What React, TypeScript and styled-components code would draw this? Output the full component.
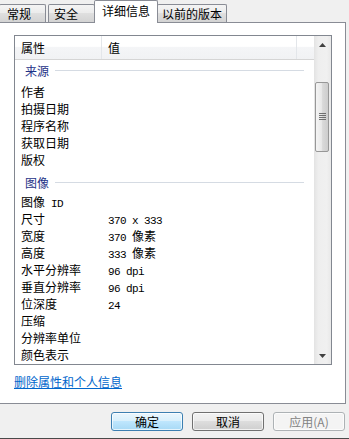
import styled, { createGlobalStyle } from "styled-components";

const GlobalStyle = createGlobalStyle`
  html, body {
    margin: 0;
    padding: 0;
    background: #f0f0f0;
  }
  body {
    font-family: "Noto Sans CJK SC", "Noto Sans", sans-serif;
    font-size: 12px;
    color: #000;
  }
`;

const Dialog = styled.div`
  width: 349px;
  height: 439px;
  display: flex;
  flex-direction: column;
  overflow: hidden;
  background: #f0f0f0;
`;

const TabStrip = styled.div`
  height: 22px;
  display: flex;
  align-items: flex-end;
  position: relative;
  z-index: 1;
`;

const Tab = styled.div<{ $active?: boolean; $w: number; $pl: number; $ml: number }>`
  box-sizing: border-box;
  width: ${(p) => p.$w}px;
  margin-left: ${(p) => p.$ml}px;
  padding-left: ${(p) => p.$pl}px;
  height: ${(p) => (p.$active ? 23 : 18)}px;
  margin-bottom: ${(p) => (p.$active ? -1 : 0)}px;
  border: 1px solid #898c95;
  border-bottom: none;
  border-radius: 2px 2px 0 0;
  background: ${(p) =>
    p.$active
      ? "#fff"
      : "linear-gradient(#f4f4f4, #ececec 45%, #dfdfdf 50%, #d3d3d3)"};
  line-height: ${(p) => (p.$active ? 20 : 17)}px;
  white-space: nowrap;
`;

const Panel = styled.div`
  height: 382px;
  box-sizing: border-box;
  margin-right: 3px;
  background: #fff;
  border: 1px solid #898c95;
  border-left: none;
  padding: 12px 0 0 14px;
  display: flex;
  flex-direction: column;
`;

const ListBox = styled.div`
  width: 318px;
  height: 330px;
  box-sizing: border-box;
  border: 1px solid #828790;
  display: flex;
  background: #fff;
`;

const ListContent = styled.div`
  flex: 1;
  overflow: hidden;
`;

const Header = styled.div`
  height: 24px;
  box-sizing: border-box;
  display: flex;
  border-bottom: 1px solid #d5d5d5;
  background: linear-gradient(#ffffff, #ffffff 45%, #f4f5f7 50%, #f1f2f4);
`;

const HeadCell = styled.div<{ $w?: number }>`
  box-sizing: border-box;
  width: ${(p) => (p.$w ? `${p.$w}px` : "auto")};
  flex: ${(p) => (p.$w ? "none" : "1")};
  padding-left: 6px;
  line-height: 23px;
  border-right: 1px solid #e3e6ea;
  &:last-child {
    border-right: none;
  }
`;

const Group = styled.div<{ $first?: boolean }>`
  display: flex;
  align-items: center;
  height: ${(p) => (p.$first ? 23 : 25)}px;
  box-sizing: border-box;
  padding: ${(p) => (p.$first ? "2px" : "6px")} 10px
    ${(p) => (p.$first ? "5px" : "3px")} 10px;
  color: #1e3287;
`;

const GroupLine = styled.div`
  flex: 1;
  height: 1px;
  margin-left: 6px;
  background: #d5dbe3;
`;

const Row = styled.div`
  height: 17px;
  display: flex;
  align-items: center;
  white-space: nowrap;
`;

const Label = styled.div`
  width: 93px;
  box-sizing: border-box;
  padding-left: 6px;
`;

const Value = styled.div`
  flex: 1;
`;

const Ascii = styled.span`
  font-family: "Liberation Mono", "DejaVu Sans Mono", monospace;
  font-size: 11px;
  letter-spacing: -0.6px;
  white-space: pre;
`;

const ScrollBar = styled.div`
  width: 17px;
  display: flex;
  flex-direction: column;
  background: linear-gradient(90deg, #e3e3e3, #eeeeee 25%, #f0f0f0 75%, #e8e8e8);
`;

const ArrowButton = styled.div`
  height: 17px;
  display: flex;
  align-items: center;
  justify-content: center;
`;

const Track = styled.div`
  flex: 1;
  padding: 29px 0 0 1px;
`;

const Thumb = styled.div`
  width: 14px;
  height: 70px;
  box-sizing: border-box;
  border: 1px solid #979797;
  border-radius: 2px;
  background: linear-gradient(90deg, #f4f4f4, #e9e9e9 45%, #d9d9d9 55%, #cdcdcd);
  display: flex;
  align-items: center;
  justify-content: center;
`;

const Grip = styled.div`
  width: 7px;
  height: 8px;
  background: repeating-linear-gradient(#5d5d5d 0 1px, transparent 1px 2px);
  opacity: 0.85;
`;

const DeleteLink = styled.a`
  margin-top: 10px;
  align-self: flex-start;
  line-height: 14px;
  color: #0066cc;
  text-decoration: underline;
  cursor: pointer;
`;

const Footer = styled.div`
  flex: 1;
  display: flex;
  justify-content: flex-end;
  align-items: flex-start;
  gap: 9px;
  padding: 8px 4px 0 0;
  border-bottom: 1px solid #4a4a4a;
`;

const Button = styled.button<{ $kind: "default" | "normal" | "disabled" }>`
  width: 72px;
  height: 19px;
  box-sizing: border-box;
  padding: 0;
  border-radius: 3px;
  font-family: "Noto Sans CJK SC", sans-serif;
  font-size: 12px;
  line-height: 16px;
  border: 1px solid
    ${(p) =>
      p.$kind === "default" ? "#3c7fb1" : p.$kind === "normal" ? "#707070" : "#adb2b5"};
  color: ${(p) => (p.$kind === "disabled" ? "#838383" : "#000")};
  background: ${(p) =>
    p.$kind === "default"
      ? "linear-gradient(#eaf6fd, #d9f0fc 45%, #bee6fd 50%, #a7d9f5)"
      : p.$kind === "normal"
      ? "linear-gradient(#f2f2f2, #ebebeb 45%, #dddddd 50%, #cfcfcf)"
      : "#f4f4f4"};
  box-shadow: inset 0 0 0 1px rgba(255, 255, 255, 0.7);
`;

const Arrow = ({ down }: { down?: boolean }) => (
  <svg width="7" height="4" viewBox="0 0 7 4">
    <path d={down ? "M0 0H7L3.5 4Z" : "M0 4H7L3.5 0Z"} fill="#404040" />
  </svg>
);

const Mixed = ({ text }: { text: string }) => (
  <>
    {text
      .split(/([\x00-\x7f]+)/)
      .filter(Boolean)
      .map((part, i) =>
        /^[\x00-\x7f]+$/.test(part) ? (
          <Ascii key={i}>{part}</Ascii>
        ) : (
          <span key={i}>{part}</span>
        )
      )}
  </>
);

const tabs = [
  { label: "常规", w: 47, pl: 7, ml: -1 },
  { label: "安全", w: 47, pl: 5, ml: 2 },
  { label: "详细信息", w: 64, pl: 7, ml: -1, active: true },
  { label: "以前的版本", w: 70, pl: 4, ml: -1 },
];

const groups = [
  {
    title: "来源",
    items: [
      ["作者", ""],
      ["拍摄日期", ""],
      ["程序名称", ""],
      ["获取日期", ""],
      ["版权", ""],
    ],
  },
  {
    title: "图像",
    items: [
      ["图像 ID", ""],
      ["尺寸", "370 x 333"],
      ["宽度", "370 像素"],
      ["高度", "333 像素"],
      ["水平分辨率", "96 dpi"],
      ["垂直分辨率", "96 dpi"],
      ["位深度", "24"],
      ["压缩", ""],
      ["分辨率单位", ""],
      ["颜色表示", ""],
    ],
  },
];

export default function App() {
  return (
    <>
      <GlobalStyle />
      <Dialog>
        <TabStrip>
          {tabs.map((t) => (
            <Tab key={t.label} $active={t.active} $w={t.w} $pl={t.pl} $ml={t.ml}>
              {t.label}
            </Tab>
          ))}
        </TabStrip>
        <Panel>
          <ListBox>
            <ListContent>
              <Header>
                <HeadCell $w={87}>属性</HeadCell>
                <HeadCell $w={195}>值</HeadCell>
                <HeadCell />
              </Header>
              {groups.map((g, gi) => (
                <div key={g.title}>
                  <Group $first={gi === 0}>
                    {g.title}
                    <GroupLine />
                  </Group>
                  {g.items.map(([label, value]) => (
                    <Row key={label}>
                      <Label>
                        <Mixed text={label} />
                      </Label>
                      <Value>
                        <Mixed text={value} />
                      </Value>
                    </Row>
                  ))}
                </div>
              ))}
            </ListContent>
            <ScrollBar>
              <ArrowButton>
                <Arrow />
              </ArrowButton>
              <Track>
                <Thumb>
                  <Grip />
                </Thumb>
              </Track>
              <ArrowButton>
                <Arrow down />
              </ArrowButton>
            </ScrollBar>
          </ListBox>
          <DeleteLink>删除属性和个人信息</DeleteLink>
        </Panel>
        <Footer>
          <Button $kind="default">确定</Button>
          <Button $kind="normal">取消</Button>
          <Button $kind="disabled">应用(A)</Button>
        </Footer>
      </Dialog>
    </>
  );
}
